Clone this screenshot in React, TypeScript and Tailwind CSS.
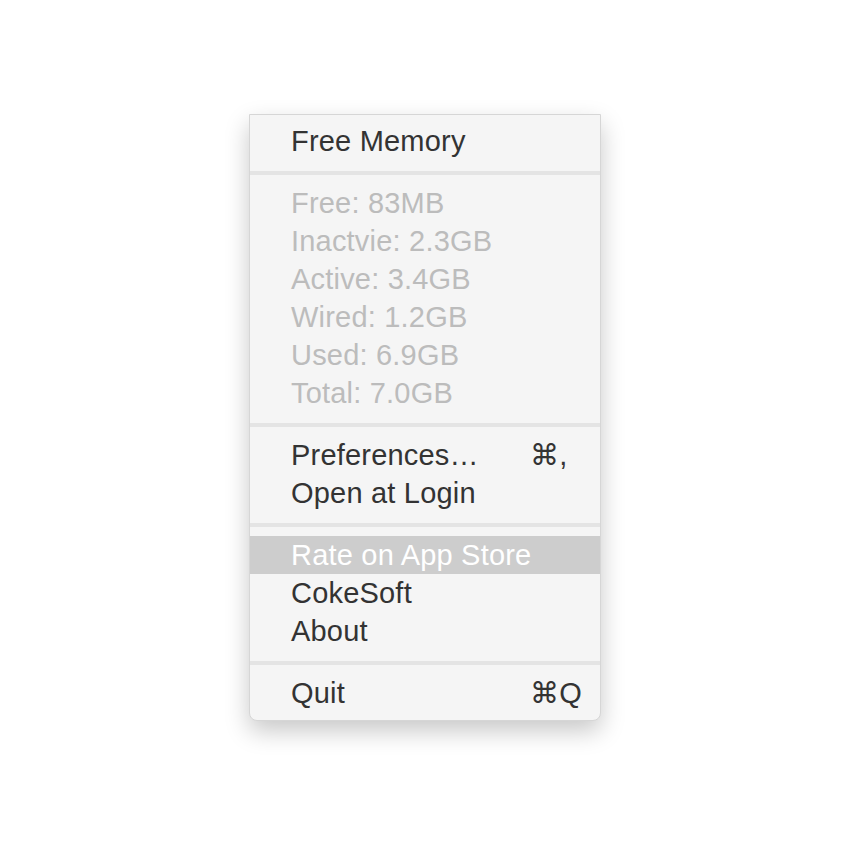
type Item = { label: string; shortcut?: string; disabled?: boolean; active?: boolean };

const sections: Item[][] = [
  [{ label: "Free Memory" }],
  [
    { label: "Free: 83MB", disabled: true },
    { label: "Inactvie: 2.3GB", disabled: true },
    { label: "Active: 3.4GB", disabled: true },
    { label: "Wired: 1.2GB", disabled: true },
    { label: "Used: 6.9GB", disabled: true },
    { label: "Total: 7.0GB", disabled: true },
  ],
  [{ label: "Preferences…", shortcut: "⌘," }, { label: "Open at Login" }],
  [{ label: "Rate on App Store", active: true }, { label: "CokeSoft" }, { label: "About" }],
  [{ label: "Quit", shortcut: "⌘Q" }],
];

function MenuRow({ item }: { item: Item }) {
  const color = item.active
    ? "bg-[#cdcdcd] text-white"
    : item.disabled
      ? "text-[#bcbcbc]"
      : "text-[#333333]";
  return (
    <div className={`flex h-[38px] items-center pl-[41px] ${color}`}>
      <span className="w-[239px] whitespace-nowrap">{item.label}</span>
      {item.shortcut && <span className="whitespace-nowrap">{item.shortcut}</span>}
    </div>
  );
}

export default function App() {
  return (
    <div className="flex min-h-[850px] justify-center bg-white pt-[114px]">
      <div
        className="h-fit w-[352px] rounded-b-[8px] border border-[#d6d6d6] bg-[#f5f5f5] pt-[7px] pb-[8px] text-[29px] leading-none tracking-[0.2px] shadow-[0_10px_24px_rgba(0,0,0,0.22)]"
        style={{ fontFamily: '"Liberation Sans", Arial, sans-serif' }}
      >
        {sections.map((rows, i) => (
          <div key={i}>
            {i > 0 && <div className="mt-[11px] mb-[9px] h-[4px] bg-[#e4e4e4]" />}
            {rows.map((item) => (
              <MenuRow key={item.label} item={item} />
            ))}
          </div>
        ))}
      </div>
    </div>
  );
}
